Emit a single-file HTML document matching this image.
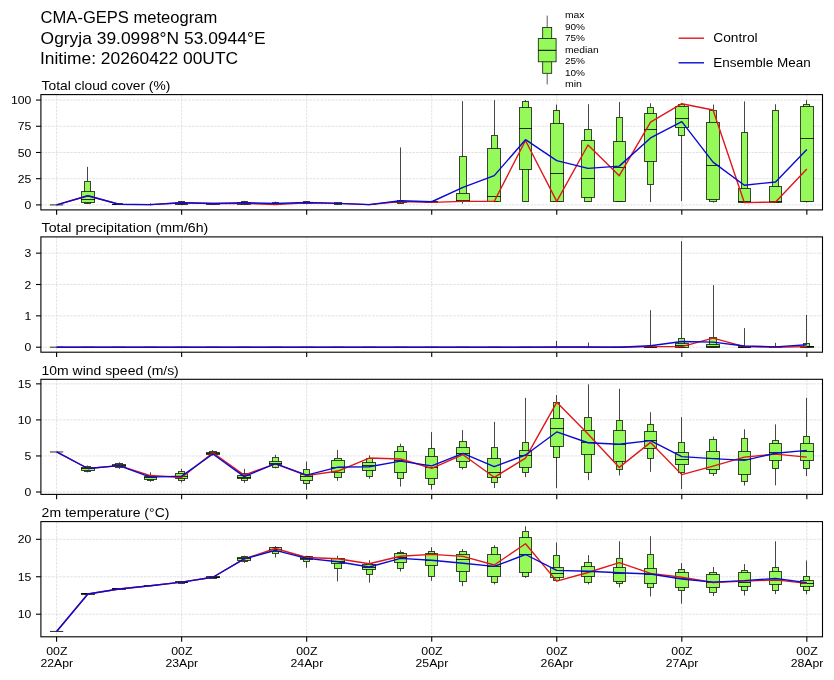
<!DOCTYPE html>
<html><head><meta charset="utf-8"><title>CMA-GEPS meteogram</title>
<style>html,body{margin:0;padding:0;background:#fff;}body{width:834px;height:680px;overflow:hidden;font-family:"Liberation Sans",sans-serif;}svg{display:block;will-change:transform;}</style>
</head><body>
<svg width="834" height="680" viewBox="0 0 834 680" font-family="'Liberation Sans', sans-serif" fill="#000">
<rect width="834" height="680" fill="#fff"/>
<text x="40.60" y="22.70" font-size="16.17" text-anchor="start" textLength="176.66" lengthAdjust="spacingAndGlyphs">CMA-GEPS meteogram</text>
<text x="40.60" y="43.50" font-size="16.17" text-anchor="start" textLength="224.90" lengthAdjust="spacingAndGlyphs">Ogryja 39.0998°N 53.0944°E</text>
<text x="40.00" y="64.40" font-size="16.17" text-anchor="start" textLength="198.06" lengthAdjust="spacingAndGlyphs">Initime: 20260422 00UTC</text>
<g stroke="#0a1a05" stroke-width="0.8">
<line x1="547.2" y1="15.6" x2="547.2" y2="27.4" stroke="#333"/>
<line x1="547.2" y1="73.3" x2="547.2" y2="84.4" stroke="#333"/>
<rect x="542.70" y="27.4" width="9.0" height="45.9" fill="#96f95a"/>
<rect x="538.30" y="38.6" width="17.8" height="23.2" fill="#96f95a"/>
<line x1="538.30" y1="50.3" x2="556.10" y2="50.3" stroke="#000" stroke-width="1"/>
</g>
<text x="564.90" y="18.30" font-size="9.52" text-anchor="start" textLength="19.61" lengthAdjust="spacingAndGlyphs">max</text>
<text x="564.90" y="29.75" font-size="9.52" text-anchor="start" textLength="20.00" lengthAdjust="spacingAndGlyphs">90%</text>
<text x="564.90" y="41.20" font-size="9.52" text-anchor="start" textLength="20.00" lengthAdjust="spacingAndGlyphs">75%</text>
<text x="564.90" y="52.65" font-size="9.52" text-anchor="start" textLength="33.74" lengthAdjust="spacingAndGlyphs">median</text>
<text x="564.90" y="64.10" font-size="9.52" text-anchor="start" textLength="20.00" lengthAdjust="spacingAndGlyphs">25%</text>
<text x="564.90" y="75.55" font-size="9.52" text-anchor="start" textLength="20.00" lengthAdjust="spacingAndGlyphs">10%</text>
<text x="564.90" y="87.00" font-size="9.52" text-anchor="start" textLength="16.97" lengthAdjust="spacingAndGlyphs">min</text>
<line x1="678.6" y1="38.2" x2="704.0" y2="38.2" stroke="#e0161a" stroke-width="1.39"/>
<line x1="678.6" y1="62.8" x2="704.0" y2="62.8" stroke="#0a0ad2" stroke-width="1.39"/>
<text x="713.30" y="41.70" font-size="12.96" text-anchor="start" textLength="44.28" lengthAdjust="spacingAndGlyphs">Control</text>
<text x="713.30" y="66.80" font-size="12.96" text-anchor="start" textLength="97.34" lengthAdjust="spacingAndGlyphs">Ensemble Mean</text>
<text x="41.60" y="89.90" font-size="12.96" text-anchor="start" textLength="128.72" lengthAdjust="spacingAndGlyphs">Total cloud cover (%)</text>
<g stroke="#d6d6d6" stroke-width="0.7" stroke-dasharray="2.57,1.11" fill="none">
<line x1="56.60" y1="94.6" x2="56.60" y2="209.9"/>
<line x1="181.64" y1="94.6" x2="181.64" y2="209.9"/>
<line x1="306.68" y1="94.6" x2="306.68" y2="209.9"/>
<line x1="431.72" y1="94.6" x2="431.72" y2="209.9"/>
<line x1="556.76" y1="94.6" x2="556.76" y2="209.9"/>
<line x1="681.80" y1="94.6" x2="681.80" y2="209.9"/>
<line x1="806.84" y1="94.6" x2="806.84" y2="209.9"/>
<line x1="40.9" y1="204.90" x2="822.5" y2="204.90"/>
<line x1="40.9" y1="178.69" x2="822.5" y2="178.69"/>
<line x1="40.9" y1="152.48" x2="822.5" y2="152.48"/>
<line x1="40.9" y1="126.26" x2="822.5" y2="126.26"/>
<line x1="40.9" y1="100.05" x2="822.5" y2="100.05"/>
</g>
<clipPath id="c0"><rect x="40.9" y="94.6" width="781.60" height="115.30"/></clipPath>
<g clip-path="url(#c0)">
<g stroke="#000" stroke-opacity="0.72" stroke-width="1" fill="#96f95a">
<line x1="49.95" y1="204.90" x2="63.25" y2="204.90" stroke="#2a2a2a" stroke-opacity="1"/>
<line x1="87.50" y1="166.84" x2="87.50" y2="181.20" stroke-opacity="0.72"/>
<line x1="87.50" y1="203.01" x2="87.50" y2="203.75" stroke-opacity="0.72"/>
<rect x="84.50" y="181.50" width="6.00" height="22.00"/>
<rect x="81.50" y="191.50" width="13.00" height="11.00"/>
<line x1="81.00" y1="199.50" x2="95.00" y2="199.50" stroke-opacity="0.8"/>
<line x1="119.50" y1="203.64" x2="119.50" y2="203.96" stroke-opacity="0.72"/>
<rect x="115.50" y="203.50" width="7.00" height="1.00"/>
<rect x="112.50" y="204.50" width="13.00" height="0.01"/>
<line x1="112.00" y1="204.50" x2="126.00" y2="204.50" stroke-opacity="0.8"/>
<line x1="150.50" y1="203.22" x2="150.50" y2="204.38" stroke-opacity="0.72"/>
<rect x="147.50" y="204.50" width="6.00" height="0.01"/>
<rect x="144.50" y="204.50" width="12.00" height="0.01"/>
<line x1="144.00" y1="204.50" x2="157.00" y2="204.50" stroke-opacity="0.8"/>
<line x1="181.50" y1="200.92" x2="181.50" y2="201.65" stroke-opacity="0.72"/>
<line x1="181.50" y1="204.59" x2="181.50" y2="204.69" stroke-opacity="0.72"/>
<rect x="178.50" y="201.50" width="6.00" height="3.00"/>
<rect x="175.50" y="202.50" width="12.00" height="2.00"/>
<line x1="175.00" y1="203.50" x2="188.00" y2="203.50" stroke-opacity="0.8"/>
<line x1="212.50" y1="202.80" x2="212.50" y2="203.01" stroke-opacity="0.72"/>
<line x1="212.50" y1="204.38" x2="212.50" y2="204.59" stroke-opacity="0.72"/>
<rect x="209.50" y="203.50" width="7.00" height="1.00"/>
<rect x="206.50" y="203.50" width="13.00" height="1.00"/>
<line x1="206.00" y1="203.50" x2="220.00" y2="203.50" stroke-opacity="0.8"/>
<line x1="244.50" y1="200.92" x2="244.50" y2="201.65" stroke-opacity="0.72"/>
<line x1="244.50" y1="204.59" x2="244.50" y2="204.69" stroke-opacity="0.72"/>
<rect x="241.50" y="201.50" width="6.00" height="3.00"/>
<rect x="237.50" y="202.50" width="13.00" height="2.00"/>
<line x1="237.00" y1="203.50" x2="251.00" y2="203.50" stroke-opacity="0.8"/>
<line x1="275.50" y1="201.65" x2="275.50" y2="202.80" stroke-opacity="0.72"/>
<line x1="275.50" y1="204.69" x2="275.50" y2="204.90" stroke-opacity="0.72"/>
<rect x="272.50" y="202.50" width="6.00" height="2.00"/>
<rect x="269.50" y="203.50" width="12.00" height="1.00"/>
<line x1="269.00" y1="203.50" x2="282.00" y2="203.50" stroke-opacity="0.8"/>
<line x1="306.50" y1="201.13" x2="306.50" y2="201.65" stroke-opacity="0.72"/>
<line x1="306.50" y1="203.96" x2="306.50" y2="204.38" stroke-opacity="0.72"/>
<rect x="303.50" y="201.50" width="6.00" height="2.00"/>
<rect x="300.50" y="202.50" width="12.00" height="1.00"/>
<line x1="300.00" y1="202.50" x2="313.00" y2="202.50" stroke-opacity="0.8"/>
<line x1="337.50" y1="202.17" x2="337.50" y2="202.70" stroke-opacity="0.72"/>
<line x1="337.50" y1="204.27" x2="337.50" y2="204.59" stroke-opacity="0.72"/>
<rect x="334.50" y="202.50" width="7.00" height="2.00"/>
<rect x="331.50" y="203.50" width="13.00" height="0.01"/>
<line x1="331.00" y1="203.50" x2="345.00" y2="203.50" stroke-opacity="0.8"/>
<line x1="369.50" y1="203.85" x2="369.50" y2="204.27" stroke-opacity="0.72"/>
<rect x="366.50" y="204.50" width="6.00" height="0.01"/>
<rect x="362.50" y="204.50" width="13.00" height="0.01"/>
<line x1="362.00" y1="204.50" x2="376.00" y2="204.50" stroke-opacity="0.8"/>
<line x1="400.50" y1="147.44" x2="400.50" y2="200.29" stroke-opacity="0.72"/>
<line x1="400.50" y1="203.33" x2="400.50" y2="203.85" stroke-opacity="0.72"/>
<rect x="397.50" y="200.50" width="6.00" height="3.00"/>
<rect x="394.50" y="201.50" width="12.00" height="1.00"/>
<line x1="394.00" y1="201.50" x2="407.00" y2="201.50" stroke-opacity="0.8"/>
<line x1="431.50" y1="200.71" x2="431.50" y2="201.23" stroke-opacity="0.72"/>
<line x1="431.50" y1="202.38" x2="431.50" y2="202.80" stroke-opacity="0.72"/>
<rect x="428.50" y="201.50" width="6.00" height="1.00"/>
<rect x="425.50" y="201.50" width="12.00" height="1.00"/>
<line x1="425.00" y1="201.50" x2="438.00" y2="201.50" stroke-opacity="0.8"/>
<line x1="462.50" y1="101.10" x2="462.50" y2="156.77" stroke-opacity="0.72"/>
<line x1="462.50" y1="201.75" x2="462.50" y2="203.64" stroke-opacity="0.72"/>
<rect x="459.50" y="156.50" width="7.00" height="45.00"/>
<rect x="456.50" y="193.50" width="13.00" height="8.00"/>
<line x1="456.00" y1="200.50" x2="470.00" y2="200.50" stroke-opacity="0.8"/>
<line x1="494.50" y1="100.15" x2="494.50" y2="135.17" stroke-opacity="0.72"/>
<line x1="494.50" y1="201.34" x2="494.50" y2="202.28" stroke-opacity="0.72"/>
<rect x="491.50" y="135.50" width="6.00" height="66.00"/>
<rect x="487.50" y="148.50" width="13.00" height="53.00"/>
<line x1="487.00" y1="196.50" x2="501.00" y2="196.50" stroke-opacity="0.8"/>
<line x1="525.50" y1="100.05" x2="525.50" y2="101.31" stroke-opacity="0.72"/>
<line x1="525.50" y1="201.13" x2="525.50" y2="201.34" stroke-opacity="0.72"/>
<rect x="522.50" y="101.50" width="6.00" height="100.00"/>
<rect x="519.50" y="107.50" width="12.00" height="62.00"/>
<line x1="519.00" y1="128.50" x2="532.00" y2="128.50" stroke-opacity="0.8"/>
<line x1="556.50" y1="104.56" x2="556.50" y2="110.85" stroke-opacity="0.72"/>
<line x1="556.50" y1="201.13" x2="556.50" y2="201.34" stroke-opacity="0.72"/>
<rect x="553.50" y="110.50" width="6.00" height="91.00"/>
<rect x="550.50" y="123.50" width="13.00" height="78.00"/>
<line x1="550.00" y1="173.50" x2="564.00" y2="173.50" stroke-opacity="0.8"/>
<line x1="588.50" y1="104.24" x2="588.50" y2="129.41" stroke-opacity="0.72"/>
<line x1="588.50" y1="201.13" x2="588.50" y2="201.96" stroke-opacity="0.72"/>
<rect x="584.50" y="129.50" width="7.00" height="72.00"/>
<rect x="581.50" y="140.50" width="13.00" height="57.00"/>
<line x1="581.00" y1="178.50" x2="595.00" y2="178.50" stroke-opacity="0.8"/>
<line x1="619.50" y1="101.94" x2="619.50" y2="117.14" stroke-opacity="0.72"/>
<line x1="619.50" y1="201.13" x2="619.50" y2="201.96" stroke-opacity="0.72"/>
<rect x="616.50" y="117.50" width="6.00" height="84.00"/>
<rect x="613.50" y="141.50" width="12.00" height="60.00"/>
<line x1="613.00" y1="167.50" x2="626.00" y2="167.50" stroke-opacity="0.8"/>
<line x1="650.50" y1="103.20" x2="650.50" y2="107.28" stroke-opacity="0.72"/>
<line x1="650.50" y1="184.66" x2="650.50" y2="202.07" stroke-opacity="0.72"/>
<rect x="647.50" y="107.50" width="6.00" height="77.00"/>
<rect x="644.50" y="113.50" width="12.00" height="48.00"/>
<line x1="644.00" y1="129.50" x2="657.00" y2="129.50" stroke-opacity="0.8"/>
<line x1="681.50" y1="103.20" x2="681.50" y2="104.98" stroke-opacity="0.72"/>
<line x1="681.50" y1="135.17" x2="681.50" y2="201.13" stroke-opacity="0.72"/>
<rect x="678.50" y="104.50" width="6.00" height="31.00"/>
<rect x="675.50" y="106.50" width="13.00" height="21.00"/>
<line x1="675.00" y1="118.50" x2="689.00" y2="118.50" stroke-opacity="0.8"/>
<line x1="713.50" y1="104.56" x2="713.50" y2="110.01" stroke-opacity="0.72"/>
<line x1="713.50" y1="201.75" x2="713.50" y2="202.59" stroke-opacity="0.72"/>
<rect x="709.50" y="110.50" width="7.00" height="91.00"/>
<rect x="706.50" y="122.50" width="13.00" height="77.00"/>
<line x1="706.00" y1="165.50" x2="720.00" y2="165.50" stroke-opacity="0.8"/>
<line x1="744.50" y1="101.41" x2="744.50" y2="132.97" stroke-opacity="0.72"/>
<line x1="744.50" y1="202.07" x2="744.50" y2="202.59" stroke-opacity="0.72"/>
<rect x="741.50" y="132.50" width="6.00" height="70.00"/>
<rect x="738.50" y="188.50" width="12.00" height="14.00"/>
<line x1="738.00" y1="201.50" x2="751.00" y2="201.50" stroke-opacity="0.8"/>
<line x1="775.50" y1="104.24" x2="775.50" y2="110.54" stroke-opacity="0.72"/>
<line x1="775.50" y1="202.07" x2="775.50" y2="202.59" stroke-opacity="0.72"/>
<rect x="772.50" y="110.50" width="6.00" height="92.00"/>
<rect x="769.50" y="186.50" width="12.00" height="16.00"/>
<line x1="769.00" y1="201.50" x2="782.00" y2="201.50" stroke-opacity="0.8"/>
<line x1="806.50" y1="100.05" x2="806.50" y2="104.24" stroke-opacity="0.72"/>
<line x1="806.50" y1="201.75" x2="806.50" y2="202.38" stroke-opacity="0.72"/>
<rect x="803.50" y="104.50" width="6.00" height="97.00"/>
<rect x="800.50" y="106.50" width="13.00" height="95.00"/>
<line x1="800.00" y1="138.50" x2="814.00" y2="138.50" stroke-opacity="0.8"/>
</g>
<polyline points="56.60,204.90 87.86,195.78 119.12,204.38 150.38,204.59 181.64,202.80 212.90,203.54 244.16,203.33 275.42,204.59 306.68,202.80 337.94,203.43 369.20,204.59 400.46,201.54 431.72,202.38 462.98,201.34 494.24,201.34 525.50,140.52 556.76,201.34 588.02,145.03 619.28,175.65 650.54,122.17 681.80,103.72 713.06,110.01 744.32,202.59 775.58,202.07 806.84,168.94" fill="none" stroke="#e0161a" stroke-width="1.39" stroke-linejoin="round"/>
<polyline points="56.60,204.90 87.86,195.78 119.12,204.27 150.38,204.59 181.64,202.80 212.90,203.54 244.16,202.70 275.42,203.54 306.68,202.49 337.94,203.43 369.20,204.59 400.46,200.71 431.72,201.75 462.98,187.29 494.24,175.65 525.50,139.68 556.76,160.65 588.02,168.41 619.28,166.11 650.54,137.90 681.80,121.65 713.06,162.12 744.32,185.19 775.58,181.94 806.84,149.54" fill="none" stroke="#0a0ad2" stroke-width="1.39" stroke-linejoin="round"/>
</g>
<rect x="40.9" y="94.6" width="781.60" height="115.30" fill="none" stroke="#000" stroke-width="1.1"/>
<g stroke="#000" stroke-width="1.1">
<line x1="56.60" y1="209.9" x2="56.60" y2="214.80"/>
<line x1="181.64" y1="209.9" x2="181.64" y2="214.80"/>
<line x1="306.68" y1="209.9" x2="306.68" y2="214.80"/>
<line x1="431.72" y1="209.9" x2="431.72" y2="214.80"/>
<line x1="556.76" y1="209.9" x2="556.76" y2="214.80"/>
<line x1="681.80" y1="209.9" x2="681.80" y2="214.80"/>
<line x1="806.84" y1="209.9" x2="806.84" y2="214.80"/>
<line x1="36.00" y1="204.90" x2="40.9" y2="204.90"/>
<line x1="36.00" y1="178.69" x2="40.9" y2="178.69"/>
<line x1="36.00" y1="152.48" x2="40.9" y2="152.48"/>
<line x1="36.00" y1="126.26" x2="40.9" y2="126.26"/>
<line x1="36.00" y1="100.05" x2="40.9" y2="100.05"/>
</g>
<text x="31.40" y="209.00" font-size="11.75" text-anchor="end" textLength="6.79" lengthAdjust="spacingAndGlyphs">0</text>
<text x="31.40" y="182.79" font-size="11.75" text-anchor="end" textLength="13.57" lengthAdjust="spacingAndGlyphs">25</text>
<text x="31.40" y="156.58" font-size="11.75" text-anchor="end" textLength="13.57" lengthAdjust="spacingAndGlyphs">50</text>
<text x="31.40" y="130.36" font-size="11.75" text-anchor="end" textLength="13.57" lengthAdjust="spacingAndGlyphs">75</text>
<text x="31.40" y="104.15" font-size="11.75" text-anchor="end" textLength="20.36" lengthAdjust="spacingAndGlyphs">100</text>
<text x="41.60" y="232.20" font-size="12.96" text-anchor="start" textLength="166.68" lengthAdjust="spacingAndGlyphs">Total precipitation (mm/6h)</text>
<g stroke="#d6d6d6" stroke-width="0.7" stroke-dasharray="2.57,1.11" fill="none">
<line x1="56.60" y1="236.9" x2="56.60" y2="352.2"/>
<line x1="181.64" y1="236.9" x2="181.64" y2="352.2"/>
<line x1="306.68" y1="236.9" x2="306.68" y2="352.2"/>
<line x1="431.72" y1="236.9" x2="431.72" y2="352.2"/>
<line x1="556.76" y1="236.9" x2="556.76" y2="352.2"/>
<line x1="681.80" y1="236.9" x2="681.80" y2="352.2"/>
<line x1="806.84" y1="236.9" x2="806.84" y2="352.2"/>
<line x1="40.9" y1="347.20" x2="822.5" y2="347.20"/>
<line x1="40.9" y1="315.85" x2="822.5" y2="315.85"/>
<line x1="40.9" y1="284.50" x2="822.5" y2="284.50"/>
<line x1="40.9" y1="253.15" x2="822.5" y2="253.15"/>
</g>
<clipPath id="c1"><rect x="40.9" y="236.9" width="781.60" height="115.30"/></clipPath>
<g clip-path="url(#c1)">
<g stroke="#000" stroke-opacity="0.72" stroke-width="1" fill="#96f95a">
<line x1="49.95" y1="347.20" x2="63.25" y2="347.20" stroke="#2a2a2a" stroke-opacity="1"/>
<line x1="81.21" y1="347.20" x2="94.51" y2="347.20" stroke="#2a2a2a" stroke-opacity="1"/>
<line x1="112.47" y1="347.20" x2="125.77" y2="347.20" stroke="#2a2a2a" stroke-opacity="1"/>
<line x1="143.73" y1="347.20" x2="157.03" y2="347.20" stroke="#2a2a2a" stroke-opacity="1"/>
<line x1="174.99" y1="347.20" x2="188.29" y2="347.20" stroke="#2a2a2a" stroke-opacity="1"/>
<line x1="206.25" y1="347.20" x2="219.55" y2="347.20" stroke="#2a2a2a" stroke-opacity="1"/>
<line x1="237.51" y1="347.20" x2="250.81" y2="347.20" stroke="#2a2a2a" stroke-opacity="1"/>
<line x1="268.77" y1="347.20" x2="282.07" y2="347.20" stroke="#2a2a2a" stroke-opacity="1"/>
<line x1="300.03" y1="347.20" x2="313.33" y2="347.20" stroke="#2a2a2a" stroke-opacity="1"/>
<line x1="331.29" y1="347.20" x2="344.59" y2="347.20" stroke="#2a2a2a" stroke-opacity="1"/>
<line x1="362.55" y1="347.20" x2="375.85" y2="347.20" stroke="#2a2a2a" stroke-opacity="1"/>
<line x1="393.81" y1="347.20" x2="407.11" y2="347.20" stroke="#2a2a2a" stroke-opacity="1"/>
<line x1="425.07" y1="347.20" x2="438.37" y2="347.20" stroke="#2a2a2a" stroke-opacity="1"/>
<line x1="456.33" y1="347.20" x2="469.63" y2="347.20" stroke="#2a2a2a" stroke-opacity="1"/>
<line x1="487.59" y1="347.20" x2="500.89" y2="347.20" stroke="#2a2a2a" stroke-opacity="1"/>
<line x1="518.85" y1="347.20" x2="532.15" y2="347.20" stroke="#2a2a2a" stroke-opacity="1"/>
<line x1="556.50" y1="340.93" x2="556.50" y2="347.04" stroke-opacity="0.72"/>
<rect x="553.50" y="347.50" width="6.00" height="0.01"/>
<rect x="550.50" y="347.50" width="13.00" height="0.01"/>
<line x1="550.00" y1="347.50" x2="564.00" y2="347.50" stroke-opacity="0.8"/>
<line x1="588.50" y1="342.50" x2="588.50" y2="347.04" stroke-opacity="0.72"/>
<rect x="584.50" y="347.50" width="7.00" height="0.01"/>
<rect x="581.50" y="347.50" width="13.00" height="0.01"/>
<line x1="581.00" y1="347.50" x2="595.00" y2="347.50" stroke-opacity="0.8"/>
<line x1="612.63" y1="347.20" x2="625.93" y2="347.20" stroke="#2a2a2a" stroke-opacity="1"/>
<line x1="650.50" y1="310.21" x2="650.50" y2="345.95" stroke-opacity="0.72"/>
<rect x="647.50" y="345.50" width="6.00" height="2.00"/>
<rect x="644.50" y="346.50" width="12.00" height="1.00"/>
<line x1="644.00" y1="347.50" x2="657.00" y2="347.50" stroke-opacity="0.8"/>
<line x1="681.50" y1="241.24" x2="681.50" y2="338.11" stroke-opacity="0.72"/>
<rect x="678.50" y="338.50" width="6.00" height="9.00"/>
<rect x="675.50" y="343.50" width="13.00" height="4.00"/>
<line x1="675.00" y1="345.50" x2="689.00" y2="345.50" stroke-opacity="0.8"/>
<line x1="713.50" y1="285.13" x2="713.50" y2="337.80" stroke-opacity="0.72"/>
<rect x="709.50" y="337.50" width="7.00" height="10.00"/>
<rect x="706.50" y="344.50" width="13.00" height="3.00"/>
<line x1="706.00" y1="346.50" x2="720.00" y2="346.50" stroke-opacity="0.8"/>
<line x1="744.50" y1="328.08" x2="744.50" y2="346.26" stroke-opacity="0.72"/>
<rect x="741.50" y="346.50" width="6.00" height="1.00"/>
<rect x="738.50" y="346.50" width="12.00" height="1.00"/>
<line x1="738.00" y1="347.50" x2="751.00" y2="347.50" stroke-opacity="0.8"/>
<line x1="775.50" y1="342.81" x2="775.50" y2="346.89" stroke-opacity="0.72"/>
<rect x="772.50" y="346.50" width="6.00" height="1.00"/>
<rect x="769.50" y="347.50" width="12.00" height="0.01"/>
<line x1="769.00" y1="347.50" x2="782.00" y2="347.50" stroke-opacity="0.8"/>
<line x1="806.50" y1="314.91" x2="806.50" y2="343.44" stroke-opacity="0.72"/>
<rect x="803.50" y="343.50" width="6.00" height="4.00"/>
<rect x="800.50" y="346.50" width="13.00" height="1.00"/>
<line x1="800.00" y1="346.50" x2="814.00" y2="346.50" stroke-opacity="0.8"/>
</g>
<polyline points="56.60,347.20 87.86,347.20 119.12,347.20 150.38,347.20 181.64,347.20 212.90,347.20 244.16,347.20 275.42,347.20 306.68,347.20 337.94,347.20 369.20,347.20 400.46,347.20 431.72,347.20 462.98,347.20 494.24,347.20 525.50,347.20 556.76,347.20 588.02,347.20 619.28,347.20 650.54,346.57 681.80,346.57 713.06,338.11 744.32,346.57 775.58,347.20 806.84,346.57" fill="none" stroke="#e0161a" stroke-width="1.39" stroke-linejoin="round"/>
<polyline points="56.60,347.20 87.86,347.20 119.12,347.20 150.38,347.20 181.64,347.20 212.90,347.20 244.16,347.20 275.42,347.20 306.68,347.20 337.94,347.20 369.20,347.20 400.46,347.20 431.72,347.20 462.98,347.20 494.24,347.20 525.50,347.20 556.76,347.04 588.02,347.04 619.28,347.20 650.54,345.79 681.80,341.56 713.06,342.18 744.32,345.95 775.58,346.89 806.84,344.69" fill="none" stroke="#0a0ad2" stroke-width="1.39" stroke-linejoin="round"/>
</g>
<rect x="40.9" y="236.9" width="781.60" height="115.30" fill="none" stroke="#000" stroke-width="1.1"/>
<g stroke="#000" stroke-width="1.1">
<line x1="56.60" y1="352.2" x2="56.60" y2="357.10"/>
<line x1="181.64" y1="352.2" x2="181.64" y2="357.10"/>
<line x1="306.68" y1="352.2" x2="306.68" y2="357.10"/>
<line x1="431.72" y1="352.2" x2="431.72" y2="357.10"/>
<line x1="556.76" y1="352.2" x2="556.76" y2="357.10"/>
<line x1="681.80" y1="352.2" x2="681.80" y2="357.10"/>
<line x1="806.84" y1="352.2" x2="806.84" y2="357.10"/>
<line x1="36.00" y1="347.20" x2="40.9" y2="347.20"/>
<line x1="36.00" y1="315.85" x2="40.9" y2="315.85"/>
<line x1="36.00" y1="284.50" x2="40.9" y2="284.50"/>
<line x1="36.00" y1="253.15" x2="40.9" y2="253.15"/>
</g>
<text x="31.40" y="351.30" font-size="11.75" text-anchor="end" textLength="6.79" lengthAdjust="spacingAndGlyphs">0</text>
<text x="31.40" y="319.95" font-size="11.75" text-anchor="end" textLength="6.79" lengthAdjust="spacingAndGlyphs">1</text>
<text x="31.40" y="288.60" font-size="11.75" text-anchor="end" textLength="6.79" lengthAdjust="spacingAndGlyphs">2</text>
<text x="31.40" y="257.25" font-size="11.75" text-anchor="end" textLength="6.79" lengthAdjust="spacingAndGlyphs">3</text>
<text x="41.60" y="374.60" font-size="12.96" text-anchor="start" textLength="137.17" lengthAdjust="spacingAndGlyphs">10m wind speed (m/s)</text>
<g stroke="#d6d6d6" stroke-width="0.7" stroke-dasharray="2.57,1.11" fill="none">
<line x1="56.60" y1="379.3" x2="56.60" y2="494.4"/>
<line x1="181.64" y1="379.3" x2="181.64" y2="494.4"/>
<line x1="306.68" y1="379.3" x2="306.68" y2="494.4"/>
<line x1="431.72" y1="379.3" x2="431.72" y2="494.4"/>
<line x1="556.76" y1="379.3" x2="556.76" y2="494.4"/>
<line x1="681.80" y1="379.3" x2="681.80" y2="494.4"/>
<line x1="806.84" y1="379.3" x2="806.84" y2="494.4"/>
<line x1="40.9" y1="492.00" x2="822.5" y2="492.00"/>
<line x1="40.9" y1="455.95" x2="822.5" y2="455.95"/>
<line x1="40.9" y1="419.90" x2="822.5" y2="419.90"/>
<line x1="40.9" y1="383.85" x2="822.5" y2="383.85"/>
</g>
<clipPath id="c2"><rect x="40.9" y="379.3" width="781.60" height="115.10"/></clipPath>
<g clip-path="url(#c2)">
<g stroke="#000" stroke-opacity="0.72" stroke-width="1" fill="#96f95a">
<line x1="49.95" y1="451.98" x2="63.25" y2="451.98" stroke="#2a2a2a" stroke-opacity="1"/>
<line x1="87.50" y1="465.47" x2="87.50" y2="466.04" stroke-opacity="0.72"/>
<line x1="87.50" y1="471.45" x2="87.50" y2="472.39" stroke-opacity="0.72"/>
<rect x="84.50" y="466.50" width="6.00" height="5.00"/>
<rect x="81.50" y="467.50" width="13.00" height="3.00"/>
<line x1="81.00" y1="468.50" x2="95.00" y2="468.50" stroke-opacity="0.8"/>
<line x1="119.50" y1="462.29" x2="119.50" y2="463.09" stroke-opacity="0.72"/>
<line x1="119.50" y1="467.77" x2="119.50" y2="468.86" stroke-opacity="0.72"/>
<rect x="115.50" y="463.50" width="7.00" height="4.00"/>
<rect x="112.50" y="464.50" width="13.00" height="2.00"/>
<line x1="112.00" y1="465.50" x2="126.00" y2="465.50" stroke-opacity="0.8"/>
<line x1="150.50" y1="472.39" x2="150.50" y2="475.06" stroke-opacity="0.72"/>
<line x1="150.50" y1="480.82" x2="150.50" y2="481.76" stroke-opacity="0.72"/>
<rect x="147.50" y="475.50" width="6.00" height="5.00"/>
<rect x="144.50" y="476.50" width="12.00" height="3.00"/>
<line x1="144.00" y1="477.50" x2="157.00" y2="477.50" stroke-opacity="0.8"/>
<line x1="181.50" y1="468.86" x2="181.50" y2="471.67" stroke-opacity="0.72"/>
<line x1="181.50" y1="480.54" x2="181.50" y2="482.41" stroke-opacity="0.72"/>
<rect x="178.50" y="471.50" width="6.00" height="9.00"/>
<rect x="175.50" y="473.50" width="12.00" height="5.00"/>
<line x1="175.00" y1="476.50" x2="188.00" y2="476.50" stroke-opacity="0.8"/>
<line x1="212.50" y1="450.18" x2="212.50" y2="451.70" stroke-opacity="0.72"/>
<line x1="212.50" y1="454.80" x2="212.50" y2="455.59" stroke-opacity="0.72"/>
<rect x="209.50" y="451.50" width="7.00" height="3.00"/>
<rect x="206.50" y="452.50" width="13.00" height="2.00"/>
<line x1="206.00" y1="453.50" x2="220.00" y2="453.50" stroke-opacity="0.8"/>
<line x1="244.50" y1="468.86" x2="244.50" y2="473.54" stroke-opacity="0.72"/>
<line x1="244.50" y1="480.25" x2="244.50" y2="482.84" stroke-opacity="0.72"/>
<rect x="241.50" y="473.50" width="6.00" height="7.00"/>
<rect x="237.50" y="475.50" width="13.00" height="3.00"/>
<line x1="237.00" y1="477.50" x2="251.00" y2="477.50" stroke-opacity="0.8"/>
<line x1="275.50" y1="454.80" x2="275.50" y2="457.46" stroke-opacity="0.72"/>
<line x1="275.50" y1="467.27" x2="275.50" y2="468.35" stroke-opacity="0.72"/>
<rect x="272.50" y="457.50" width="6.00" height="10.00"/>
<rect x="269.50" y="461.50" width="12.00" height="3.00"/>
<line x1="269.00" y1="463.50" x2="282.00" y2="463.50" stroke-opacity="0.8"/>
<line x1="306.50" y1="461.65" x2="306.50" y2="469.43" stroke-opacity="0.72"/>
<line x1="306.50" y1="483.78" x2="306.50" y2="489.69" stroke-opacity="0.72"/>
<rect x="303.50" y="469.50" width="6.00" height="14.00"/>
<rect x="300.50" y="474.50" width="12.00" height="6.00"/>
<line x1="300.00" y1="476.50" x2="313.00" y2="476.50" stroke-opacity="0.8"/>
<line x1="337.50" y1="449.97" x2="337.50" y2="458.19" stroke-opacity="0.72"/>
<line x1="337.50" y1="477.22" x2="337.50" y2="480.82" stroke-opacity="0.72"/>
<rect x="334.50" y="458.50" width="7.00" height="19.00"/>
<rect x="331.50" y="460.50" width="13.00" height="12.00"/>
<line x1="331.00" y1="467.50" x2="345.00" y2="467.50" stroke-opacity="0.8"/>
<line x1="369.50" y1="455.37" x2="369.50" y2="458.98" stroke-opacity="0.72"/>
<line x1="369.50" y1="476.79" x2="369.50" y2="478.81" stroke-opacity="0.72"/>
<rect x="366.50" y="458.50" width="6.00" height="18.00"/>
<rect x="362.50" y="462.50" width="13.00" height="8.00"/>
<line x1="362.00" y1="465.50" x2="376.00" y2="465.50" stroke-opacity="0.8"/>
<line x1="400.50" y1="443.69" x2="400.50" y2="446.07" stroke-opacity="0.72"/>
<line x1="400.50" y1="478.81" x2="400.50" y2="486.59" stroke-opacity="0.72"/>
<rect x="397.50" y="446.50" width="6.00" height="32.00"/>
<rect x="394.50" y="451.50" width="12.00" height="21.00"/>
<line x1="394.00" y1="460.50" x2="407.00" y2="460.50" stroke-opacity="0.8"/>
<line x1="431.50" y1="432.08" x2="431.50" y2="448.02" stroke-opacity="0.72"/>
<line x1="431.50" y1="484.14" x2="431.50" y2="489.62" stroke-opacity="0.72"/>
<rect x="428.50" y="448.50" width="6.00" height="36.00"/>
<rect x="425.50" y="456.50" width="12.00" height="22.00"/>
<line x1="425.00" y1="467.50" x2="438.00" y2="467.50" stroke-opacity="0.8"/>
<line x1="462.50" y1="430.07" x2="462.50" y2="441.31" stroke-opacity="0.72"/>
<line x1="462.50" y1="467.49" x2="462.50" y2="469.50" stroke-opacity="0.72"/>
<rect x="459.50" y="441.50" width="7.00" height="26.00"/>
<rect x="456.50" y="447.50" width="13.00" height="14.00"/>
<line x1="456.00" y1="453.50" x2="470.00" y2="453.50" stroke-opacity="0.8"/>
<line x1="494.50" y1="421.85" x2="494.50" y2="447.51" stroke-opacity="0.72"/>
<line x1="494.50" y1="482.27" x2="494.50" y2="488.03" stroke-opacity="0.72"/>
<rect x="491.50" y="447.50" width="6.00" height="35.00"/>
<rect x="487.50" y="458.50" width="13.00" height="19.00"/>
<line x1="487.00" y1="472.50" x2="501.00" y2="472.50" stroke-opacity="0.8"/>
<line x1="525.50" y1="397.84" x2="525.50" y2="442.25" stroke-opacity="0.72"/>
<line x1="525.50" y1="472.46" x2="525.50" y2="477.15" stroke-opacity="0.72"/>
<rect x="522.50" y="442.50" width="6.00" height="30.00"/>
<rect x="519.50" y="450.50" width="12.00" height="17.00"/>
<line x1="519.00" y1="455.50" x2="532.00" y2="455.50" stroke-opacity="0.8"/>
<line x1="556.50" y1="395.10" x2="556.50" y2="402.31" stroke-opacity="0.72"/>
<line x1="556.50" y1="457.10" x2="556.50" y2="488.11" stroke-opacity="0.72"/>
<rect x="553.50" y="402.50" width="6.00" height="55.00"/>
<rect x="550.50" y="418.50" width="13.00" height="28.00"/>
<line x1="550.00" y1="428.50" x2="564.00" y2="428.50" stroke-opacity="0.8"/>
<line x1="588.50" y1="384.28" x2="588.50" y2="417.59" stroke-opacity="0.72"/>
<line x1="588.50" y1="472.10" x2="588.50" y2="480.18" stroke-opacity="0.72"/>
<rect x="584.50" y="417.50" width="7.00" height="55.00"/>
<rect x="581.50" y="430.50" width="13.00" height="24.00"/>
<line x1="581.00" y1="442.50" x2="595.00" y2="442.50" stroke-opacity="0.8"/>
<line x1="619.50" y1="388.82" x2="619.50" y2="420.62" stroke-opacity="0.72"/>
<line x1="619.50" y1="469.36" x2="619.50" y2="475.49" stroke-opacity="0.72"/>
<rect x="616.50" y="420.50" width="6.00" height="49.00"/>
<rect x="613.50" y="430.50" width="12.00" height="31.00"/>
<line x1="613.00" y1="444.50" x2="626.00" y2="444.50" stroke-opacity="0.8"/>
<line x1="650.50" y1="412.19" x2="650.50" y2="424.23" stroke-opacity="0.72"/>
<line x1="650.50" y1="458.04" x2="650.50" y2="471.88" stroke-opacity="0.72"/>
<rect x="647.50" y="424.50" width="6.00" height="34.00"/>
<rect x="644.50" y="431.50" width="12.00" height="17.00"/>
<line x1="644.00" y1="440.50" x2="657.00" y2="440.50" stroke-opacity="0.8"/>
<line x1="681.50" y1="417.23" x2="681.50" y2="442.40" stroke-opacity="0.72"/>
<line x1="681.50" y1="472.46" x2="681.50" y2="489.19" stroke-opacity="0.72"/>
<rect x="678.50" y="442.50" width="6.00" height="30.00"/>
<rect x="675.50" y="452.50" width="13.00" height="12.00"/>
<line x1="675.00" y1="459.50" x2="689.00" y2="459.50" stroke-opacity="0.8"/>
<line x1="713.50" y1="436.48" x2="713.50" y2="439.51" stroke-opacity="0.72"/>
<line x1="713.50" y1="473.90" x2="713.50" y2="475.99" stroke-opacity="0.72"/>
<rect x="709.50" y="439.50" width="7.00" height="34.00"/>
<rect x="706.50" y="451.50" width="13.00" height="18.00"/>
<line x1="706.00" y1="458.50" x2="720.00" y2="458.50" stroke-opacity="0.8"/>
<line x1="744.50" y1="429.27" x2="744.50" y2="438.29" stroke-opacity="0.72"/>
<line x1="744.50" y1="481.40" x2="744.50" y2="485.58" stroke-opacity="0.72"/>
<rect x="741.50" y="438.50" width="6.00" height="43.00"/>
<rect x="738.50" y="451.50" width="12.00" height="23.00"/>
<line x1="738.00" y1="459.50" x2="751.00" y2="459.50" stroke-opacity="0.8"/>
<line x1="775.50" y1="424.37" x2="775.50" y2="440.59" stroke-opacity="0.72"/>
<line x1="775.50" y1="468.50" x2="775.50" y2="485.37" stroke-opacity="0.72"/>
<rect x="772.50" y="440.50" width="6.00" height="28.00"/>
<rect x="769.50" y="443.50" width="12.00" height="17.00"/>
<line x1="769.00" y1="452.50" x2="782.00" y2="452.50" stroke-opacity="0.8"/>
<line x1="806.50" y1="397.77" x2="806.50" y2="436.48" stroke-opacity="0.72"/>
<line x1="806.50" y1="468.50" x2="806.50" y2="475.99" stroke-opacity="0.72"/>
<rect x="803.50" y="436.50" width="6.00" height="32.00"/>
<rect x="800.50" y="443.50" width="13.00" height="17.00"/>
<line x1="800.00" y1="451.50" x2="814.00" y2="451.50" stroke-opacity="0.8"/>
</g>
<polyline points="56.60,451.98 87.86,468.50 119.12,465.68 150.38,475.56 181.64,477.44 212.90,452.78 244.16,475.06 275.42,463.88 306.68,475.63 337.94,471.02 369.20,458.04 400.46,458.98 431.72,468.28 462.98,454.72 494.24,477.29 525.50,458.11 556.76,402.31 588.02,434.10 619.28,467.41 650.54,442.40 681.80,474.62 713.06,466.12 744.32,457.10 775.58,454.08 806.84,457.10" fill="none" stroke="#e0161a" stroke-width="1.39" stroke-linejoin="round"/>
<polyline points="56.60,451.98 87.86,468.50 119.12,465.68 150.38,477.08 181.64,476.14 212.90,454.00 244.16,476.64 275.42,463.66 306.68,475.20 337.94,467.13 369.20,466.76 400.46,461.14 431.72,465.90 462.98,453.43 494.24,466.69 525.50,455.01 556.76,431.94 588.02,442.76 619.28,444.20 650.54,440.59 681.80,456.60 713.06,458.62 744.32,460.35 775.58,453.21 806.84,450.33" fill="none" stroke="#0a0ad2" stroke-width="1.39" stroke-linejoin="round"/>
</g>
<rect x="40.9" y="379.3" width="781.60" height="115.10" fill="none" stroke="#000" stroke-width="1.1"/>
<g stroke="#000" stroke-width="1.1">
<line x1="56.60" y1="494.4" x2="56.60" y2="499.30"/>
<line x1="181.64" y1="494.4" x2="181.64" y2="499.30"/>
<line x1="306.68" y1="494.4" x2="306.68" y2="499.30"/>
<line x1="431.72" y1="494.4" x2="431.72" y2="499.30"/>
<line x1="556.76" y1="494.4" x2="556.76" y2="499.30"/>
<line x1="681.80" y1="494.4" x2="681.80" y2="499.30"/>
<line x1="806.84" y1="494.4" x2="806.84" y2="499.30"/>
<line x1="36.00" y1="492.00" x2="40.9" y2="492.00"/>
<line x1="36.00" y1="455.95" x2="40.9" y2="455.95"/>
<line x1="36.00" y1="419.90" x2="40.9" y2="419.90"/>
<line x1="36.00" y1="383.85" x2="40.9" y2="383.85"/>
</g>
<text x="31.40" y="496.10" font-size="11.75" text-anchor="end" textLength="6.79" lengthAdjust="spacingAndGlyphs">0</text>
<text x="31.40" y="460.05" font-size="11.75" text-anchor="end" textLength="6.79" lengthAdjust="spacingAndGlyphs">5</text>
<text x="31.40" y="424.00" font-size="11.75" text-anchor="end" textLength="13.57" lengthAdjust="spacingAndGlyphs">10</text>
<text x="31.40" y="387.95" font-size="11.75" text-anchor="end" textLength="13.57" lengthAdjust="spacingAndGlyphs">15</text>
<text x="41.60" y="516.90" font-size="12.96" text-anchor="start" textLength="127.83" lengthAdjust="spacingAndGlyphs">2m temperature (°C)</text>
<g stroke="#d6d6d6" stroke-width="0.7" stroke-dasharray="2.57,1.11" fill="none">
<line x1="56.60" y1="521.6" x2="56.60" y2="636.8"/>
<line x1="181.64" y1="521.6" x2="181.64" y2="636.8"/>
<line x1="306.68" y1="521.6" x2="306.68" y2="636.8"/>
<line x1="431.72" y1="521.6" x2="431.72" y2="636.8"/>
<line x1="556.76" y1="521.6" x2="556.76" y2="636.8"/>
<line x1="681.80" y1="521.6" x2="681.80" y2="636.8"/>
<line x1="806.84" y1="521.6" x2="806.84" y2="636.8"/>
<line x1="40.9" y1="614.20" x2="822.5" y2="614.20"/>
<line x1="40.9" y1="576.75" x2="822.5" y2="576.75"/>
<line x1="40.9" y1="539.30" x2="822.5" y2="539.30"/>
</g>
<clipPath id="c3"><rect x="40.9" y="521.6" width="781.60" height="115.20"/></clipPath>
<g clip-path="url(#c3)">
<g stroke="#000" stroke-opacity="0.72" stroke-width="1" fill="#96f95a">
<line x1="49.95" y1="631.43" x2="63.25" y2="631.43" stroke="#2a2a2a" stroke-opacity="1"/>
<line x1="87.50" y1="593.75" x2="87.50" y2="593.83" stroke-opacity="0.72"/>
<line x1="87.50" y1="594.13" x2="87.50" y2="594.20" stroke-opacity="0.72"/>
<rect x="84.50" y="593.50" width="6.00" height="1.00"/>
<rect x="81.50" y="593.50" width="13.00" height="1.00"/>
<line x1="81.00" y1="593.50" x2="95.00" y2="593.50" stroke-opacity="0.8"/>
<line x1="119.50" y1="588.58" x2="119.50" y2="588.73" stroke-opacity="0.72"/>
<line x1="119.50" y1="589.11" x2="119.50" y2="589.26" stroke-opacity="0.72"/>
<rect x="115.50" y="588.50" width="7.00" height="1.00"/>
<rect x="112.50" y="588.50" width="13.00" height="1.00"/>
<line x1="112.00" y1="588.50" x2="126.00" y2="588.50" stroke-opacity="0.8"/>
<line x1="150.50" y1="585.14" x2="150.50" y2="585.44" stroke-opacity="0.72"/>
<line x1="150.50" y1="585.96" x2="150.50" y2="586.19" stroke-opacity="0.72"/>
<rect x="147.50" y="585.50" width="6.00" height="0.01"/>
<rect x="144.50" y="585.50" width="12.00" height="0.01"/>
<line x1="144.00" y1="585.50" x2="157.00" y2="585.50" stroke-opacity="0.8"/>
<line x1="181.50" y1="580.87" x2="181.50" y2="581.09" stroke-opacity="0.72"/>
<line x1="181.50" y1="583.12" x2="181.50" y2="583.34" stroke-opacity="0.72"/>
<rect x="178.50" y="581.50" width="6.00" height="2.00"/>
<rect x="175.50" y="581.50" width="12.00" height="1.00"/>
<line x1="175.00" y1="582.50" x2="188.00" y2="582.50" stroke-opacity="0.8"/>
<line x1="212.50" y1="576.00" x2="212.50" y2="576.15" stroke-opacity="0.72"/>
<line x1="212.50" y1="578.40" x2="212.50" y2="578.55" stroke-opacity="0.72"/>
<rect x="209.50" y="576.50" width="7.00" height="2.00"/>
<rect x="206.50" y="576.50" width="13.00" height="1.00"/>
<line x1="206.00" y1="577.50" x2="220.00" y2="577.50" stroke-opacity="0.8"/>
<line x1="244.50" y1="555.70" x2="244.50" y2="556.23" stroke-opacity="0.72"/>
<line x1="244.50" y1="561.62" x2="244.50" y2="562.89" stroke-opacity="0.72"/>
<rect x="241.50" y="556.50" width="6.00" height="5.00"/>
<rect x="237.50" y="557.50" width="13.00" height="3.00"/>
<line x1="237.00" y1="558.50" x2="251.00" y2="558.50" stroke-opacity="0.8"/>
<line x1="275.50" y1="546.12" x2="275.50" y2="547.24" stroke-opacity="0.72"/>
<line x1="275.50" y1="553.91" x2="275.50" y2="557.50" stroke-opacity="0.72"/>
<rect x="272.50" y="547.50" width="6.00" height="6.00"/>
<rect x="269.50" y="547.50" width="12.00" height="4.00"/>
<line x1="269.00" y1="549.50" x2="282.00" y2="549.50" stroke-opacity="0.8"/>
<line x1="306.50" y1="555.70" x2="306.50" y2="556.60" stroke-opacity="0.72"/>
<line x1="306.50" y1="561.99" x2="306.50" y2="567.76" stroke-opacity="0.72"/>
<rect x="303.50" y="556.50" width="6.00" height="5.00"/>
<rect x="300.50" y="556.50" width="12.00" height="3.00"/>
<line x1="300.00" y1="558.50" x2="313.00" y2="558.50" stroke-opacity="0.8"/>
<line x1="337.50" y1="555.70" x2="337.50" y2="558.03" stroke-opacity="0.72"/>
<line x1="337.50" y1="568.89" x2="337.50" y2="581.39" stroke-opacity="0.72"/>
<rect x="334.50" y="558.50" width="7.00" height="10.00"/>
<rect x="331.50" y="558.50" width="13.00" height="5.00"/>
<line x1="331.00" y1="561.50" x2="345.00" y2="561.50" stroke-opacity="0.8"/>
<line x1="369.50" y1="560.20" x2="369.50" y2="563.42" stroke-opacity="0.72"/>
<line x1="369.50" y1="574.20" x2="369.50" y2="582.67" stroke-opacity="0.72"/>
<rect x="366.50" y="563.50" width="6.00" height="11.00"/>
<rect x="362.50" y="564.50" width="13.00" height="5.00"/>
<line x1="362.00" y1="567.50" x2="376.00" y2="567.50" stroke-opacity="0.8"/>
<line x1="400.50" y1="550.31" x2="400.50" y2="552.11" stroke-opacity="0.72"/>
<line x1="400.50" y1="568.29" x2="400.50" y2="571.51" stroke-opacity="0.72"/>
<rect x="397.50" y="552.50" width="6.00" height="16.00"/>
<rect x="394.50" y="553.50" width="12.00" height="9.00"/>
<line x1="394.00" y1="557.50" x2="407.00" y2="557.50" stroke-opacity="0.8"/>
<line x1="431.50" y1="547.24" x2="431.50" y2="551.51" stroke-opacity="0.72"/>
<line x1="431.50" y1="576.38" x2="431.50" y2="580.87" stroke-opacity="0.72"/>
<rect x="428.50" y="551.50" width="6.00" height="25.00"/>
<rect x="425.50" y="553.50" width="12.00" height="12.00"/>
<line x1="425.00" y1="560.50" x2="438.00" y2="560.50" stroke-opacity="0.8"/>
<line x1="462.50" y1="549.04" x2="462.50" y2="551.51" stroke-opacity="0.72"/>
<line x1="462.50" y1="581.47" x2="462.50" y2="586.19" stroke-opacity="0.72"/>
<rect x="459.50" y="551.50" width="7.00" height="30.00"/>
<rect x="456.50" y="554.50" width="13.00" height="17.00"/>
<line x1="456.00" y1="559.50" x2="470.00" y2="559.50" stroke-opacity="0.8"/>
<line x1="494.50" y1="545.22" x2="494.50" y2="547.91" stroke-opacity="0.72"/>
<line x1="494.50" y1="582.07" x2="494.50" y2="584.39" stroke-opacity="0.72"/>
<rect x="491.50" y="547.50" width="6.00" height="35.00"/>
<rect x="487.50" y="554.50" width="13.00" height="22.00"/>
<line x1="487.00" y1="566.50" x2="501.00" y2="566.50" stroke-opacity="0.8"/>
<line x1="525.50" y1="526.27" x2="525.50" y2="531.14" stroke-opacity="0.72"/>
<line x1="525.50" y1="576.30" x2="525.50" y2="577.87" stroke-opacity="0.72"/>
<rect x="522.50" y="531.50" width="6.00" height="45.00"/>
<rect x="519.50" y="537.50" width="12.00" height="35.00"/>
<line x1="519.00" y1="554.50" x2="532.00" y2="554.50" stroke-opacity="0.8"/>
<line x1="556.50" y1="542.52" x2="556.50" y2="555.40" stroke-opacity="0.72"/>
<line x1="556.50" y1="580.27" x2="556.50" y2="581.47" stroke-opacity="0.72"/>
<rect x="553.50" y="555.50" width="6.00" height="25.00"/>
<rect x="550.50" y="567.50" width="13.00" height="10.00"/>
<line x1="550.00" y1="573.50" x2="564.00" y2="573.50" stroke-opacity="0.8"/>
<line x1="588.50" y1="555.10" x2="588.50" y2="562.59" stroke-opacity="0.72"/>
<line x1="588.50" y1="582.07" x2="588.50" y2="584.39" stroke-opacity="0.72"/>
<rect x="584.50" y="562.50" width="7.00" height="20.00"/>
<rect x="581.50" y="566.50" width="13.00" height="10.00"/>
<line x1="581.00" y1="571.50" x2="595.00" y2="571.50" stroke-opacity="0.8"/>
<line x1="619.50" y1="541.25" x2="619.50" y2="558.32" stroke-opacity="0.72"/>
<line x1="619.50" y1="583.34" x2="619.50" y2="587.46" stroke-opacity="0.72"/>
<rect x="616.50" y="558.50" width="6.00" height="25.00"/>
<rect x="613.50" y="567.50" width="12.00" height="14.00"/>
<line x1="613.00" y1="573.50" x2="626.00" y2="573.50" stroke-opacity="0.8"/>
<line x1="650.50" y1="536.23" x2="650.50" y2="554.50" stroke-opacity="0.72"/>
<line x1="650.50" y1="587.46" x2="650.50" y2="596.45" stroke-opacity="0.72"/>
<rect x="647.50" y="554.50" width="6.00" height="33.00"/>
<rect x="644.50" y="568.50" width="12.00" height="15.00"/>
<line x1="644.00" y1="574.50" x2="657.00" y2="574.50" stroke-opacity="0.8"/>
<line x1="681.50" y1="563.19" x2="681.50" y2="569.48" stroke-opacity="0.72"/>
<line x1="681.50" y1="590.68" x2="681.50" y2="603.64" stroke-opacity="0.72"/>
<rect x="678.50" y="569.50" width="6.00" height="21.00"/>
<rect x="675.50" y="572.50" width="13.00" height="15.00"/>
<line x1="675.00" y1="578.50" x2="689.00" y2="578.50" stroke-opacity="0.8"/>
<line x1="713.50" y1="567.09" x2="713.50" y2="572.48" stroke-opacity="0.72"/>
<line x1="713.50" y1="592.85" x2="713.50" y2="596.07" stroke-opacity="0.72"/>
<rect x="709.50" y="572.50" width="7.00" height="20.00"/>
<rect x="706.50" y="574.50" width="13.00" height="13.00"/>
<line x1="706.00" y1="582.50" x2="720.00" y2="582.50" stroke-opacity="0.8"/>
<line x1="744.50" y1="564.09" x2="744.50" y2="570.68" stroke-opacity="0.72"/>
<line x1="744.50" y1="590.16" x2="744.50" y2="595.55" stroke-opacity="0.72"/>
<rect x="741.50" y="570.50" width="6.00" height="20.00"/>
<rect x="738.50" y="572.50" width="12.00" height="14.00"/>
<line x1="738.00" y1="582.50" x2="751.00" y2="582.50" stroke-opacity="0.8"/>
<line x1="775.50" y1="541.25" x2="775.50" y2="567.69" stroke-opacity="0.72"/>
<line x1="775.50" y1="590.16" x2="775.50" y2="594.13" stroke-opacity="0.72"/>
<rect x="772.50" y="567.50" width="6.00" height="23.00"/>
<rect x="769.50" y="571.50" width="12.00" height="13.00"/>
<line x1="769.00" y1="580.50" x2="782.00" y2="580.50" stroke-opacity="0.8"/>
<line x1="806.50" y1="560.50" x2="806.50" y2="576.30" stroke-opacity="0.72"/>
<line x1="806.50" y1="590.16" x2="806.50" y2="594.28" stroke-opacity="0.72"/>
<rect x="803.50" y="576.50" width="6.00" height="14.00"/>
<rect x="800.50" y="580.50" width="13.00" height="6.00"/>
<line x1="800.00" y1="583.50" x2="814.00" y2="583.50" stroke-opacity="0.8"/>
</g>
<polyline points="56.60,631.43 87.86,593.98 119.12,588.96 150.38,585.74 181.64,582.14 212.90,577.27 244.16,558.92 275.42,548.51 306.68,557.50 337.94,558.77 369.20,563.79 400.46,556.23 431.72,554.43 462.98,556.38 494.24,564.99 525.50,543.72 556.76,581.17 588.02,572.48 619.28,562.59 650.54,573.38 681.80,577.20 713.06,582.44 744.32,581.17 775.58,579.90 806.84,583.34" fill="none" stroke="#e0161a" stroke-width="1.39" stroke-linejoin="round"/>
<polyline points="56.60,631.43 87.86,593.98 119.12,588.96 150.38,585.74 181.64,582.14 212.90,577.27 244.16,558.92 275.42,550.31 306.68,558.40 337.94,561.77 369.20,567.01 400.46,558.40 431.72,560.20 462.98,563.27 494.24,566.41 525.50,554.50 556.76,570.38 588.02,571.28 619.28,572.71 650.54,573.98 681.80,579.00 713.06,582.07 744.32,580.64 775.58,578.47 806.84,582.59" fill="none" stroke="#0a0ad2" stroke-width="1.39" stroke-linejoin="round"/>
</g>
<rect x="40.9" y="521.6" width="781.60" height="115.20" fill="none" stroke="#000" stroke-width="1.1"/>
<g stroke="#000" stroke-width="1.1">
<line x1="56.60" y1="636.8" x2="56.60" y2="641.70"/>
<line x1="181.64" y1="636.8" x2="181.64" y2="641.70"/>
<line x1="306.68" y1="636.8" x2="306.68" y2="641.70"/>
<line x1="431.72" y1="636.8" x2="431.72" y2="641.70"/>
<line x1="556.76" y1="636.8" x2="556.76" y2="641.70"/>
<line x1="681.80" y1="636.8" x2="681.80" y2="641.70"/>
<line x1="806.84" y1="636.8" x2="806.84" y2="641.70"/>
<line x1="36.00" y1="614.20" x2="40.9" y2="614.20"/>
<line x1="36.00" y1="576.75" x2="40.9" y2="576.75"/>
<line x1="36.00" y1="539.30" x2="40.9" y2="539.30"/>
</g>
<text x="31.40" y="618.30" font-size="11.75" text-anchor="end" textLength="13.57" lengthAdjust="spacingAndGlyphs">10</text>
<text x="31.40" y="580.85" font-size="11.75" text-anchor="end" textLength="13.57" lengthAdjust="spacingAndGlyphs">15</text>
<text x="31.40" y="543.40" font-size="11.75" text-anchor="end" textLength="13.57" lengthAdjust="spacingAndGlyphs">20</text>
<text x="56.80" y="654.50" font-size="11.75" text-anchor="middle" textLength="21.31" lengthAdjust="spacingAndGlyphs">00Z</text>
<text x="56.80" y="666.80" font-size="11.75" text-anchor="middle" textLength="32.69" lengthAdjust="spacingAndGlyphs">22Apr</text>
<text x="181.84" y="654.50" font-size="11.75" text-anchor="middle" textLength="21.31" lengthAdjust="spacingAndGlyphs">00Z</text>
<text x="181.84" y="666.80" font-size="11.75" text-anchor="middle" textLength="32.69" lengthAdjust="spacingAndGlyphs">23Apr</text>
<text x="306.88" y="654.50" font-size="11.75" text-anchor="middle" textLength="21.31" lengthAdjust="spacingAndGlyphs">00Z</text>
<text x="306.88" y="666.80" font-size="11.75" text-anchor="middle" textLength="32.69" lengthAdjust="spacingAndGlyphs">24Apr</text>
<text x="431.92" y="654.50" font-size="11.75" text-anchor="middle" textLength="21.31" lengthAdjust="spacingAndGlyphs">00Z</text>
<text x="431.92" y="666.80" font-size="11.75" text-anchor="middle" textLength="32.69" lengthAdjust="spacingAndGlyphs">25Apr</text>
<text x="556.96" y="654.50" font-size="11.75" text-anchor="middle" textLength="21.31" lengthAdjust="spacingAndGlyphs">00Z</text>
<text x="556.96" y="666.80" font-size="11.75" text-anchor="middle" textLength="32.69" lengthAdjust="spacingAndGlyphs">26Apr</text>
<text x="682.00" y="654.50" font-size="11.75" text-anchor="middle" textLength="21.31" lengthAdjust="spacingAndGlyphs">00Z</text>
<text x="682.00" y="666.80" font-size="11.75" text-anchor="middle" textLength="32.69" lengthAdjust="spacingAndGlyphs">27Apr</text>
<text x="807.04" y="654.50" font-size="11.75" text-anchor="middle" textLength="21.31" lengthAdjust="spacingAndGlyphs">00Z</text>
<text x="807.04" y="666.80" font-size="11.75" text-anchor="middle" textLength="32.69" lengthAdjust="spacingAndGlyphs">28Apr</text>
</svg>
</body></html>
